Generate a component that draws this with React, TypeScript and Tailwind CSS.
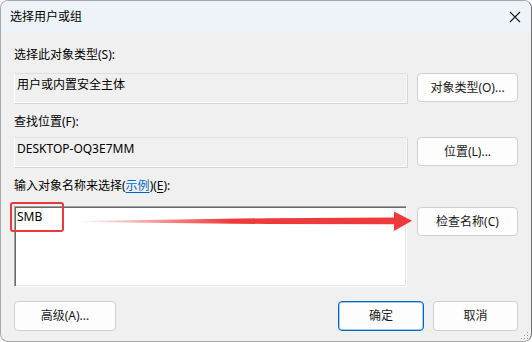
const btn =
  "flex items-center justify-center rounded-[4px] border border-[#d0d0d0] bg-[#fdfdfd] text-[12px] leading-4 text-[#1b1b1b]";

const staticBox =
  "h-[30px] flex-1 border border-t-[#dedede] border-l-white border-r-[#f8f8f8] border-b-white pl-[2px] pt-[3px] shadow-[1px_1px_0_#d4d4d4]";

function Arrow() {
  return (
    <svg className="pointer-events-none absolute left-0 top-0" width="532" height="342">
      <defs>
        <linearGradient id="fade" x1="80" y1="0" x2="230" y2="0" gradientUnits="userSpaceOnUse">
          <stop offset="0" stopColor="#ef3a3c" stopOpacity="0.05" />
          <stop offset="1" stopColor="#ef3a3c" stopOpacity="1" />
        </linearGradient>
      </defs>
      <polygon points="80,220 266,217.2 395,216.6 395,223.2 266,223 80,221" fill="url(#fade)" />
      <polygon points="393,210.5 411,219.8 393,230" fill="#ef3a3c" />
    </svg>
  );
}

export default function App() {
  return (
    <div className="h-[342px] w-[532px] bg-white font-['Noto_Sans','Noto_Sans_CJK_SC',sans-serif]">
      <div className="relative flex h-[342px] w-[532px] flex-col overflow-hidden rounded-lg border border-[#a8a8a8] border-r-[#6e6e6e] bg-[#f0f0f0]">
        <div className="flex h-[31px] shrink-0 items-center justify-between bg-[#eef3f9] pl-[9px] pr-[9px]">
          <span className="text-[12px] leading-4 text-black">选择用户或组</span>
          <svg width="12" height="12" viewBox="0 0 12 12" className="mr-[1px]">
            <path d="M1 1L11 11M11 1L1 11" stroke="#1a1a1a" strokeWidth="1.1" />
          </svg>
        </div>

        <div className="flex flex-col px-[13px] text-[12px] leading-4 text-black">
          <div className="mt-[15px]">选择此对象类型(S):</div>
          <div className="mt-[10px] flex gap-[10px]">
            <div className={staticBox}>用户或内置安全主体</div>
            <button className={`${btn} h-[29px] w-[101px]`}>对象类型(O)...</button>
          </div>

          <div className="mt-[11px]">查找位置(F):</div>
          <div className="mt-[7px] flex gap-[10px]">
            <div className={staticBox}>DESKTOP-OQ3E7MM</div>
            <button className={`${btn} h-[29px] w-[101px]`}>位置(L)...</button>
          </div>

          <div className="mt-[11px]">
            输入对象名称来选择(<span className="text-[#0066cc] underline underline-offset-2">示例</span>)(
            <span className="underline underline-offset-2">E</span>):
          </div>
          <div className="mt-[12px] flex items-start gap-[10px]">
            <div className="h-[81px] flex-1 border border-t-[#a0a0a0] border-l-[#a0a0a0] border-r-white border-b-white bg-white pl-[2px] pt-[2px] shadow-[inset_1px_1px_0_#696969,inset_-1px_-1px_0_#e3e3e3]">
              SMB
            </div>
            <button className={`${btn} mt-px h-[29px] w-[101px]`}>检查名称(C)</button>
          </div>

          <div className="mt-[14px] flex items-center">
            <button className={`${btn} h-[30px] w-[102px]`}>高级(A)...</button>
            <button className="ml-auto flex h-[30px] w-[86px] items-center justify-center rounded-[4px] border border-[#0067c0] bg-[#fdfdfd] text-[12px] leading-4 text-[#1b1b1b] shadow-[inset_0_0_0_1px_rgba(0,103,192,0.35)]">
              确定
            </button>
            <button className={`${btn} ml-[9px] h-[30px] w-[85px]`}>取消</button>
          </div>
        </div>

        <div className="pointer-events-none absolute left-[9px] top-[201px] h-[30px] w-[54px] rounded-[3px] border-2 border-[#e8393d]" />
        <Arrow />

        <svg className="absolute bottom-[1px] right-[2px]" width="9" height="9" viewBox="0 0 9 9">
          <rect x="7" y="1" width="1" height="1" fill="#9a9a9a" />
          <rect x="4" y="4" width="1" height="1" fill="#9a9a9a" />
          <rect x="7" y="4" width="1" height="1" fill="#9a9a9a" />
          <rect x="1" y="7" width="1" height="1" fill="#9a9a9a" />
          <rect x="4" y="7" width="1" height="1" fill="#9a9a9a" />
          <rect x="7" y="7" width="1" height="1" fill="#9a9a9a" />
        </svg>
      </div>
    </div>
  );
}
